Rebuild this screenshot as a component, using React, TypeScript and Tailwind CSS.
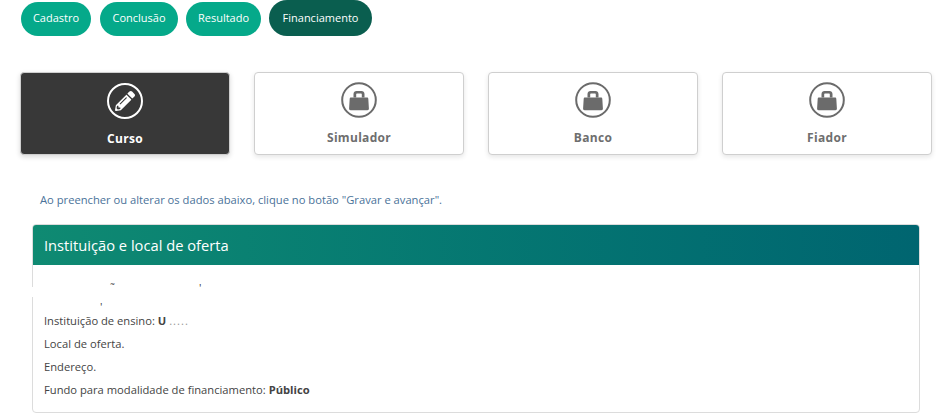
import { FaPencilAlt } from 'react-icons/fa';

const steps = [
  { label: 'Cadastro', width: 'w-[70px] mr-px' },
  { label: 'Conclusão', width: 'w-[78px]' },
  { label: 'Resultado', width: 'w-[75px]' },
];

const locked = ['Simulador', 'Banco', 'Fiador'];

function LockIcon() {
  return (
    <svg className="w-[36px] h-[36px]" viewBox="0 0 36 36">
      <circle cx="18" cy="18" r="16.8" fill="none" stroke="#6b6b6b" strokeWidth="2" />
      <path
        fillRule="evenodd"
        d="M12.5 15.6V12C12.5 10 13.8 9 15.5 9H20.5C22.2 9 23.5 10 23.5 12V15.6H20.8V12.6C20.8 11.9 20.4 11.6 19.8 11.6H16.2C15.6 11.6 15.2 11.9 15.2 12.6V15.6Z"
        fill="#6b6b6b"
      />
      <path d="M10 15.6H26C26.8 15.6 27.2 16 27.3 16.8L27.9 26.6C28 27.6 27.4 28.3 26.4 28.3H9.6C8.6 28.3 8 27.6 8.1 26.6L8.7 16.8C8.8 16 9.2 15.6 10 15.6Z" fill="#6b6b6b" />
    </svg>
  );
}

export default function App() {
  return (
    <div className="w-[938px] h-[416px] overflow-hidden bg-white font-['Open_Sans',sans-serif]">
      {/* etapas */}
      <div className="flex items-center gap-2 pl-[21px] h-[36px]">
        {steps.map((s) => (
          <div
            key={s.label}
            className={`${s.width} h-[34px] mt-[1px] flex items-center justify-center rounded-full bg-[#05a98a] text-white text-[11px]`}
          >
            {s.label}
          </div>
        ))}
        <div className="w-[103px] h-[36px] flex items-center justify-center rounded-full bg-[#0a5e4f] text-white text-[11px]">
          Financiamento
        </div>
      </div>

      {/* abas */}
      <div className="flex gap-[24px] pl-[20px] mt-[36px]">
        <div className="w-[210px] h-[83px] flex flex-col items-center pt-[10px] rounded-[4px] bg-[#383838] border border-[#cfcfcf] shadow-[0_2px_5px_rgba(0,0,0,0.15)]">
          <div className="w-[36px] h-[36px] flex items-center justify-center rounded-full border-2 border-white">
            <FaPencilAlt className="text-white text-[20px]" />
          </div>
          <span className="mt-[12px] text-[12px] leading-[16px] font-bold tracking-[0.3px] text-white">Curso</span>
        </div>
        {locked.map((name) => (
          <div
            key={name}
            className="w-[210px] h-[83px] flex flex-col items-center pt-[9px] rounded-[4px] bg-white border border-[#cfcfcf] shadow-[0_2px_5px_rgba(0,0,0,0.1)]"
          >
            <LockIcon />
            <span className="mt-[12px] text-[12px] leading-[16px] font-bold tracking-[0.3px] text-[#6e6e6e]">{name}</span>
          </div>
        ))}
      </div>

      <p className="mt-[37px] ml-[40px] text-[11.2px] leading-[16px] text-[#4a7299]">
        Ao preencher ou alterar os dados abaixo, clique no botão "Gravar e avançar".
      </p>

      {/* painel */}
      <div className="mt-[16px] ml-[32px] w-[888px] h-[189px] rounded-[4px] border border-[#dcdcdc]">
        <div className="h-[40px] flex items-center pl-[11px] rounded-t-[3px] bg-gradient-to-r from-[#0f8a72] to-[#006570] text-white text-[14.7px]">
          Instituição e local de oferta
        </div>
        <div className="relative pl-[11px] pt-[44px] text-[11.2px] leading-[23px] text-[#444]">
          {/* trecho apagado na captura */}
          <div className="absolute left-[-1px] top-[22px] w-[4px] h-[10px] bg-white" />
          <span className="absolute left-[77px] top-[15px] text-[11.2px] leading-[16px]">˜</span>
          <span className="absolute left-[166px] top-[15px] text-[11.2px] leading-[16px]">'</span>
          <span className="absolute left-[67px] top-[34px] text-[11.2px] leading-[16px]">'</span>
          <p>
            Instituição de ensino: <b>U</b> <span className="text-[#999] tracking-[1px]">.....</span>
          </p>
          <p>Local de oferta.</p>
          <p>Endereço.</p>
          <p>
            Fundo para modalidade de financiamento: <b>Público</b>
          </p>
        </div>
      </div>
    </div>
  );
}
